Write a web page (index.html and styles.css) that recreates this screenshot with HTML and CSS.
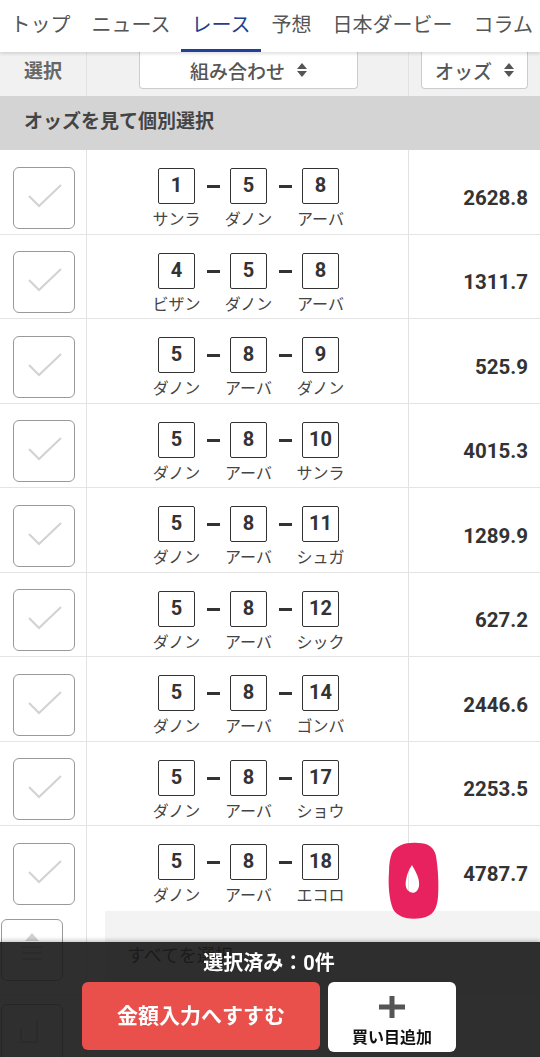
FILE: index.html
```html
<!DOCTYPE html>
<html lang="ja">
<head>
    <meta charset="UTF-8">
    <title>オッズ</title>
    <link rel="stylesheet" href="styles.css">
</head>
<body>

<nav class="tabs">
    <a class="tab">トップ</a>
    <a class="tab">ニュース</a>
    <a class="tab current">レース</a>
    <a class="tab">予想</a>
    <a class="tab">日本ダービー</a>
    <a class="tab">コラム</a>
</nav>

<div class="head-row">
    <div class="cell sel-cell">選択</div>
    <div class="cell combo-cell">
        <span class="sort-btn wide">組み合わせ
            <svg class="sort" width="10" height="14" viewBox="0 0 10 14"><polygon points="5,0 10,6 0,6"/><polygon points="0,8 10,8 5,14"/></svg>
        </span>
    </div>
    <div class="cell odds-cell">
        <span class="sort-btn">オッズ
            <svg class="sort" width="10" height="14" viewBox="0 0 10 14"><polygon points="5,0 10,6 0,6"/><polygon points="0,8 10,8 5,14"/></svg>
        </span>
    </div>
</div>

<div class="section-title">オッズを見て個別選択</div>

<div class="list">
    <div class="row">
        <div class="cell sel-cell"><span class="check"><svg width="62" height="62" viewBox="0 0 62 62"><polyline points="16,29 26,39 48,18"/></svg></span></div>
        <div class="cell combo-cell">
            <div class="combo">
                <div class="horse"><span class="num">1</span><span class="name">サンラ</span></div>
                <span class="dash"></span>
                <div class="horse"><span class="num">5</span><span class="name">ダノン</span></div>
                <span class="dash"></span>
                <div class="horse"><span class="num">8</span><span class="name">アーバ</span></div>
            </div>
        </div>
        <div class="cell odds-cell"><span class="odds">2628.8</span></div>
    </div>
    <div class="row">
        <div class="cell sel-cell"><span class="check"><svg width="62" height="62" viewBox="0 0 62 62"><polyline points="16,29 26,39 48,18"/></svg></span></div>
        <div class="cell combo-cell">
            <div class="combo">
                <div class="horse"><span class="num">4</span><span class="name">ビザン</span></div>
                <span class="dash"></span>
                <div class="horse"><span class="num">5</span><span class="name">ダノン</span></div>
                <span class="dash"></span>
                <div class="horse"><span class="num">8</span><span class="name">アーバ</span></div>
            </div>
        </div>
        <div class="cell odds-cell"><span class="odds">1311.7</span></div>
    </div>
    <div class="row">
        <div class="cell sel-cell"><span class="check"><svg width="62" height="62" viewBox="0 0 62 62"><polyline points="16,29 26,39 48,18"/></svg></span></div>
        <div class="cell combo-cell">
            <div class="combo">
                <div class="horse"><span class="num">5</span><span class="name">ダノン</span></div>
                <span class="dash"></span>
                <div class="horse"><span class="num">8</span><span class="name">アーバ</span></div>
                <span class="dash"></span>
                <div class="horse"><span class="num">9</span><span class="name">ダノン</span></div>
            </div>
        </div>
        <div class="cell odds-cell"><span class="odds">525.9</span></div>
    </div>
    <div class="row">
        <div class="cell sel-cell"><span class="check"><svg width="62" height="62" viewBox="0 0 62 62"><polyline points="16,29 26,39 48,18"/></svg></span></div>
        <div class="cell combo-cell">
            <div class="combo">
                <div class="horse"><span class="num">5</span><span class="name">ダノン</span></div>
                <span class="dash"></span>
                <div class="horse"><span class="num">8</span><span class="name">アーバ</span></div>
                <span class="dash"></span>
                <div class="horse"><span class="num">10</span><span class="name">サンラ</span></div>
            </div>
        </div>
        <div class="cell odds-cell"><span class="odds">4015.3</span></div>
    </div>
    <div class="row">
        <div class="cell sel-cell"><span class="check"><svg width="62" height="62" viewBox="0 0 62 62"><polyline points="16,29 26,39 48,18"/></svg></span></div>
        <div class="cell combo-cell">
            <div class="combo">
                <div class="horse"><span class="num">5</span><span class="name">ダノン</span></div>
                <span class="dash"></span>
                <div class="horse"><span class="num">8</span><span class="name">アーバ</span></div>
                <span class="dash"></span>
                <div class="horse"><span class="num">11</span><span class="name">シュガ</span></div>
            </div>
        </div>
        <div class="cell odds-cell"><span class="odds">1289.9</span></div>
    </div>
    <div class="row">
        <div class="cell sel-cell"><span class="check"><svg width="62" height="62" viewBox="0 0 62 62"><polyline points="16,29 26,39 48,18"/></svg></span></div>
        <div class="cell combo-cell">
            <div class="combo">
                <div class="horse"><span class="num">5</span><span class="name">ダノン</span></div>
                <span class="dash"></span>
                <div class="horse"><span class="num">8</span><span class="name">アーバ</span></div>
                <span class="dash"></span>
                <div class="horse"><span class="num">12</span><span class="name">シック</span></div>
            </div>
        </div>
        <div class="cell odds-cell"><span class="odds">627.2</span></div>
    </div>
    <div class="row">
        <div class="cell sel-cell"><span class="check"><svg width="62" height="62" viewBox="0 0 62 62"><polyline points="16,29 26,39 48,18"/></svg></span></div>
        <div class="cell combo-cell">
            <div class="combo">
                <div class="horse"><span class="num">5</span><span class="name">ダノン</span></div>
                <span class="dash"></span>
                <div class="horse"><span class="num">8</span><span class="name">アーバ</span></div>
                <span class="dash"></span>
                <div class="horse"><span class="num">14</span><span class="name">ゴンバ</span></div>
            </div>
        </div>
        <div class="cell odds-cell"><span class="odds">2446.6</span></div>
    </div>
    <div class="row">
        <div class="cell sel-cell"><span class="check"><svg width="62" height="62" viewBox="0 0 62 62"><polyline points="16,29 26,39 48,18"/></svg></span></div>
        <div class="cell combo-cell">
            <div class="combo">
                <div class="horse"><span class="num">5</span><span class="name">ダノン</span></div>
                <span class="dash"></span>
                <div class="horse"><span class="num">8</span><span class="name">アーバ</span></div>
                <span class="dash"></span>
                <div class="horse"><span class="num">17</span><span class="name">ショウ</span></div>
            </div>
        </div>
        <div class="cell odds-cell"><span class="odds">2253.5</span></div>
    </div>
    <div class="row last">
        <div class="cell sel-cell"><span class="check"><svg width="62" height="62" viewBox="0 0 62 62"><polyline points="16,29 26,39 48,18"/></svg></span></div>
        <div class="cell combo-cell">
            <div class="combo">
                <div class="horse"><span class="num">5</span><span class="name">ダノン</span></div>
                <span class="dash"></span>
                <div class="horse"><span class="num">8</span><span class="name">アーバ</span></div>
                <span class="dash"></span>
                <div class="horse"><span class="num">18</span><span class="name">エコロ</span></div>
            </div>
        </div>
        <div class="cell odds-cell">
            <!-- 手書きの丸印 -->
            <svg class="mark" width="54" height="80" viewBox="0 0 54 80">
                <path fill-rule="evenodd" d="M5 12 C9 4 20 1 31 2 C41 2 47 6 49 15 C51 27 52 43 51 56 C50 68 46 75 35 77 C23 79 11 77 6 68 C2 58 1 43 2 31 C2 23 3 17 5 12 Z M25 24 C29 31 33 38 32 45 C31 51 27 53 23 51 C19 49 18 44 19 39 C20 33 22 28 25 24 Z"/>
            </svg>
            <span class="odds">4787.7</span>
        </div>
    </div>
    <div class="row-all">
        <div class="cell sel-cell"><span class="check"><svg width="62" height="62" viewBox="0 0 62 62"><polygon points="31,14 38,22 24,22"/><line x1="21" y1="28" x2="41" y2="28"/><line x1="21" y1="34" x2="41" y2="34"/><line x1="21" y1="40" x2="41" y2="40"/></svg></span></div>
        <div class="all-label">すべてを選択</div>
    </div>
    <div class="row-extra">
        <div class="cell sel-cell"><span class="check"><svg width="62" height="62" viewBox="0 0 62 62"><polyline points="36,16 36,38 20,38 20,24"/></svg></span></div>
    </div>
</div>

<div class="bottom-bar">
    <div class="count">選択済み：0件</div>
    <div class="btns">
        <a class="btn-next">金額入力へすすむ</a>
        <a class="btn-add">
            <svg width="26" height="22" viewBox="0 0 26 22"><rect x="10.5" y="0" width="5" height="22"/><rect x="0" y="8.5" width="26" height="5"/></svg>
            <span>買い目追加</span>
        </a>
    </div>
</div>

</body>
</html>
```

FILE: styles.css
```css
* {
    padding: 0;
    margin: 0;
    box-sizing: border-box;
}
body {
    width: 540px;
    height: 1057px;
    overflow: hidden;
    background-color: #fff;
    font-family: Roboto, "Noto Sans CJK JP", sans-serif;
    color: #333;
}

/* タブ */
.tabs {
    position: relative;
    z-index: 2;
    display: flex;
    height: 52px;
    background-color: #fff;
    box-shadow: 0 2px 3px rgba(0, 0, 0, .12);
    white-space: nowrap;
}
.tab {
    padding: 0 10.5px;
    font-size: 20px;
    line-height: 50px;
    color: #555;
    border-bottom: 3px solid transparent;
}
.tab.current {
    color: #1f3f8f;
    border-bottom-color: #22409a;
}

/* 見出し行 */
.head-row,
.row,
.row-all,
.row-extra {
    display: grid;
    grid-template-columns: 87px 322px 1fr;
}
.head-row {
    height: 44px;
    background-color: #f1f1f1;
}
.head-row .cell {
    display: flex;
    align-items: flex-start;
}
.cell {
    border-right: 1px solid #e2e2e2;
}
.cell.odds-cell {
    border-right: none;
}
.head-row .sel-cell {
    justify-content: flex-start;
    padding: 4px 0 0 24px;
    font-size: 19px;
    font-weight: bold;
    color: #666;
}
.head-row .combo-cell {
    justify-content: center;
    padding-left: 2px;
}
.head-row .odds-cell {
    justify-content: flex-end;
    padding-right: 12px;
}
.sort-btn {
    display: flex;
    align-items: center;
    justify-content: center;
    gap: 12px;
    width: 107px;
    height: 37px;
    background-color: #fff;
    border: 1px solid #ccc;
    border-top: none;
    border-radius: 0 0 4px 4px;
    font-size: 19px;
    color: #555;
    font-weight: 500;
}
.sort-btn.wide {
    width: 219px;
}
.sort {
    fill: #555;
}

.section-title {
    height: 54px;
    padding-left: 24px;
    background-color: #d4d4d4;
    font-size: 19px;
    font-weight: bold;
    line-height: 52px;
    color: #444;
}

/* 一覧 */
.row {
    height: 84.5px;
    border-bottom: 1px solid #e4e4e4;
}
.row.last {
    border-bottom: none;
}
.row .cell {
    display: flex;
    align-items: center;
    padding-top: 16px;
    padding-bottom: 5px;
}
.sel-cell {
    justify-content: center;
}
.check {
    display: block;
    width: 62px;
    height: 62px;
    border: 1px solid #999;
    border-radius: 6px;
    margin-left: 1px;
}
.check svg {
    display: block;
    margin: -1px;
    fill: none;
    stroke: #d2d2d2;
    stroke-width: 2;
}
.check svg polygon {
    fill: #d2d2d2;
    stroke: none;
}
.combo-cell {
    justify-content: center;
}
.combo {
    display: flex;
    align-items: flex-start;
    margin-top: 2px;
    padding-left: 2px;
}
.horse {
    display: flex;
    flex-direction: column;
    align-items: center;
    width: 48px;
}
.num {
    width: 37px;
    height: 36px;
    border: 1.5px solid #333;
    border-radius: 2px;
    font-size: 20px;
    font-weight: bold;
    line-height: 33px;
    text-align: center;
    color: #333;
}
.name {
    margin-top: 7px;
    font-size: 16px;
    line-height: 18px;
    color: #444;
    white-space: nowrap;
}
.dash {
    position: relative;
    width: 24px;
    height: 36px;
}
.dash::after {
    content: "";
    position: absolute;
    left: 6px;
    top: 17px;
    width: 13px;
    height: 3px;
    background-color: #333;
}
.odds-cell {
    position: relative;
    justify-content: flex-end;
    padding-right: 12px;
}
.odds {
    font-size: 20.5px;
    font-weight: bold;
    color: #333;
}
.mark {
    position: absolute;
    left: -22px;
    top: 15px;
    fill: #e8215f;
}

/* すべてを選択 */
.row-all {
    grid-template-columns: 87px 1fr;
    height: 84px;
}
.row-all .cell {
    padding-top: 8px;
    border-bottom: 1px solid #e4e4e4;
}
.all-label {
    margin-left: 18px;
    padding: 30px 0 0 22px;
    background-color: #f3f3f3;
    font-size: 18px;
    color: #333;
}
.row-extra {
    grid-template-columns: 87px 1fr;
    height: 80px;
}
.row-extra .cell {
    padding-top: 9px;
}

/* 下部バー */
.bottom-bar {
    position: fixed;
    left: 0;
    bottom: 0;
    z-index: 3;
    width: 540px;
    height: 115px;
    padding-top: 8px;
    background-color: rgba(24, 24, 24, .9);
    box-shadow: 0 -2px 4px rgba(0, 0, 0, .2);
}
.count {
    font-size: 20px;
    font-weight: bold;
    line-height: 26px;
    color: #fff;
    text-align: center;
    padding-right: 2px;
}
.btns {
    display: flex;
    justify-content: center;
    gap: 8px;
    margin-top: 6px;
    padding-right: 2px;
}
.btn-next {
    width: 238px;
    height: 68px;
    background-color: #e9504c;
    border-radius: 6px;
    font-size: 21px;
    font-weight: bold;
    line-height: 68px;
    color: #fff;
    text-align: center;
}
.btn-add {
    display: flex;
    flex-direction: column;
    align-items: center;
    width: 128px;
    height: 70px;
    padding-top: 14px;
    background-color: #fff;
    border-radius: 6px;
}
.btn-add svg {
    fill: #555;
}
.btn-add span {
    margin-top: 6px;
    font-size: 16px;
    font-weight: bold;
    color: #111;
}
```
